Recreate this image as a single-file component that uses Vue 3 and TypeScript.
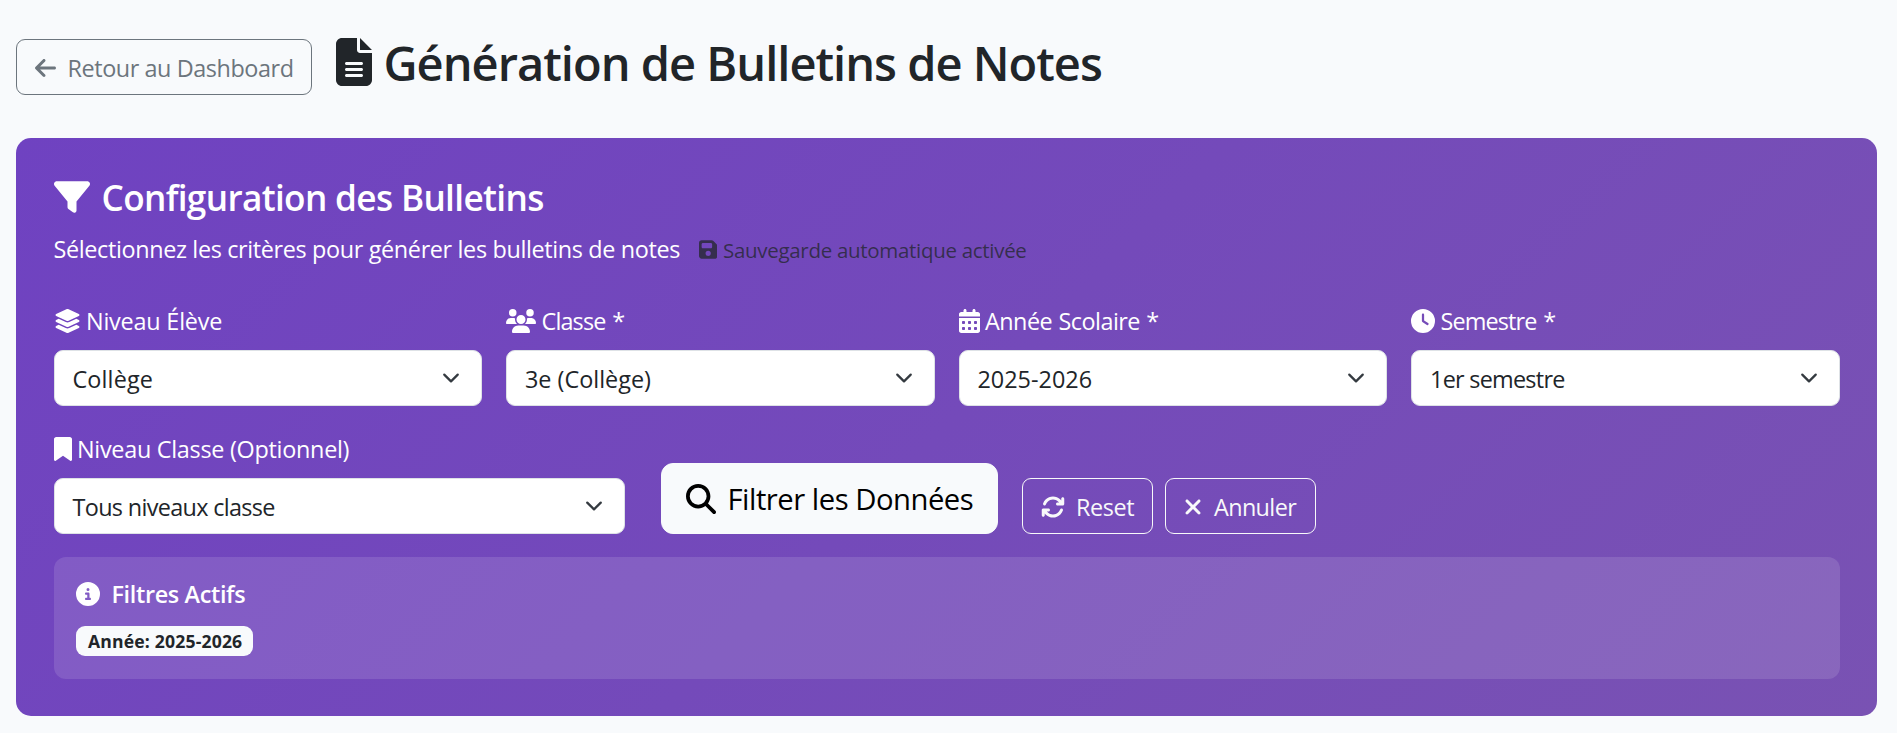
<script setup lang="ts">
import { defineComponent, h, ref } from 'vue'

interface Glyph {
  w: number
  d: string
}

const glyphs: Record<string, Glyph> = {
  arrowLeft: {
    w: 448,
    d: 'M9.4 233.4c-12.5 12.5-12.5 32.8 0 45.3l160 160c12.5 12.5 32.8 12.5 45.3 0s12.5-32.8 0-45.3L109.2 288 416 288c17.7 0 32-14.3 32-32s-14.3-32-32-32l-306.7 0L214.6 118.6c12.5-12.5 12.5-32.8 0-45.3s-32.8-12.5-45.3 0l-160 160z',
  },
  file: {
    w: 384,
    d: 'M64 0C28.7 0 0 28.7 0 64V448c0 35.3 28.7 64 64 64H320c35.3 0 64-28.7 64-64V160H256c-17.7 0-32-14.3-32-32V0H64zM256 0V128H384L256 0zM112 256H272c8.8 0 16 7.2 16 16s-7.2 16-16 16H112c-8.8 0-16-7.2-16-16s7.2-16 16-16zm0 64H272c8.8 0 16 7.2 16 16s-7.2 16-16 16H112c-8.8 0-16-7.2-16-16s7.2-16 16-16zm0 64H272c8.8 0 16 7.2 16 16s-7.2 16-16 16H112c-8.8 0-16-7.2-16-16s7.2-16 16-16z',
  },
  filter: {
    w: 512,
    d: 'M3.9 54.9C10.5 40.9 24.5 32 40 32H472c15.5 0 29.5 8.9 36.1 22.9s4.6 30.5-5.2 42.5L320 320.9V448c0 12.1-6.8 23.2-17.7 28.6s-23.8 4.3-33.5-3l-64-48c-8.1-6-12.8-15.5-12.8-25.6V320.9L9 97.3C-.7 85.4-2.8 68.8 3.9 54.9z',
  },
  save: {
    w: 448,
    d: 'M64 32C28.7 32 0 60.7 0 96V416c0 35.3 28.7 64 64 64H384c35.3 0 64-28.7 64-64V173.3c0-17-6.7-33.3-18.7-45.3L352 50.7C340 38.7 323.7 32 306.7 32H64zm0 96c0-17.7 14.3-32 32-32H288c17.7 0 32 14.3 32 32v64c0 17.7-14.3 32-32 32H96c-17.7 0-32-14.3-32-32V128zM224 288a64 64 0 1 1 0 128 64 64 0 1 1 0-128z',
  },
  layers: {
    w: 576,
    d: 'M264.5 5.2c14.9-6.9 32.1-6.9 47 0l218.6 101c8.5 3.9 13.9 12.4 13.9 21.8s-5.4 17.9-13.9 21.8l-218.6 101c-14.9 6.9-32.1 6.9-47 0L45.9 149.8C37.4 145.8 32 137.3 32 128s5.4-17.9 13.9-21.8L264.5 5.2zM476.9 209.6l53.2 24.6c8.5 3.9 13.9 12.4 13.9 21.8s-5.4 17.9-13.9 21.8l-218.6 101c-14.9 6.9-32.1 6.9-47 0L45.9 277.8C37.4 273.8 32 265.3 32 256s5.4-17.9 13.9-21.8l53.2-24.6 152 70.2c23.4 10.8 50.4 10.8 73.8 0l152-70.2zm-152 198.2l152-70.2 53.2 24.6c8.5 3.9 13.9 12.4 13.9 21.8s-5.4 17.9-13.9 21.8l-218.6 101c-14.9 6.9-32.1 6.9-47 0L45.9 405.8C37.4 401.8 32 393.3 32 384s5.4-17.9 13.9-21.8l53.2-24.6 152 70.2c23.4 10.8 50.4 10.8 73.8 0z',
  },
  users: {
    w: 640,
    d: 'M144 0a80 80 0 1 1 0 160A80 80 0 1 1 144 0zM512 0a80 80 0 1 1 0 160A80 80 0 1 1 512 0zM0 298.7C0 239.8 47.8 192 106.7 192h42.7c15.9 0 31 3.5 44.6 9.7c-1.3 7.2-1.9 14.7-1.9 22.3c0 38.2 16.8 72.5 43.3 96c-.2 0-.4 0-.7 0H21.3C9.6 320 0 310.4 0 298.7zM405.3 320c-.2 0-.4 0-.7 0c26.6-23.5 43.3-57.8 43.3-96c0-7.6-.7-15-1.9-22.3c13.6-6.3 28.7-9.7 44.6-9.7h42.7C592.2 192 640 239.8 640 298.7c0 11.8-9.6 21.3-21.3 21.3H405.3zM224 224a96 96 0 1 1 192 0 96 96 0 1 1-192 0zM128 485.3C128 411.7 187.7 352 261.3 352H378.7C452.3 352 512 411.7 512 485.3c0 14.7-11.9 26.7-26.7 26.7H154.7c-14.7 0-26.7-11.9-26.7-26.7z',
  },
  calendar: {
    w: 448,
    d: 'M128 0c17.7 0 32 14.3 32 32V64H288V32c0-17.7 14.3-32 32-32s32 14.3 32 32V64h48c26.5 0 48 21.5 48 48v48H0V112C0 85.5 21.5 64 48 64H96V32c0-17.7 14.3-32 32-32zM0 192H448V464c0 26.5-21.5 48-48 48H48c-26.5 0-48-21.5-48-48V192zm64 80v32c0 8.8 7.2 16 16 16h32c8.8 0 16-7.2 16-16V272c0-8.8-7.2-16-16-16H80c-8.8 0-16 7.2-16 16zm128 0v32c0 8.8 7.2 16 16 16h32c8.8 0 16-7.2 16-16V272c0-8.8-7.2-16-16-16H208c-8.8 0-16 7.2-16 16zm128 0v32c0 8.8 7.2 16 16 16h32c8.8 0 16-7.2 16-16V272c0-8.8-7.2-16-16-16H336c-8.8 0-16 7.2-16 16zM64 400v32c0 8.8 7.2 16 16 16h32c8.8 0 16-7.2 16-16V400c0-8.8-7.2-16-16-16H80c-8.8 0-16 7.2-16 16zm128 0v32c0 8.8 7.2 16 16 16h32c8.8 0 16-7.2 16-16V400c0-8.8-7.2-16-16-16H208c-8.8 0-16 7.2-16 16zm128 0v32c0 8.8 7.2 16 16 16h32c8.8 0 16-7.2 16-16V400c0-8.8-7.2-16-16-16H336c-8.8 0-16 7.2-16 16z',
  },
  clock: {
    w: 512,
    d: 'M256 0a256 256 0 1 1 0 512A256 256 0 1 1 256 0zM232 120V256c0 8 4 15.5 10.7 20l96 64c11 7.4 25.9 4.4 33.3-6.7s4.4-25.9-6.7-33.3L280 243.2V120c0-13.3-10.7-24-24-24s-24 10.7-24 24z',
  },
  bookmark: {
    w: 384,
    d: 'M0 48V487.7C0 501.1 10.9 512 24.3 512c5 0 9.9-1.5 14-4.4L192 400 345.7 507.6c4.1 2.9 9 4.4 14 4.4c13.4 0 24.3-10.9 24.3-24.3V48c0-26.5-21.5-48-48-48H48C21.5 0 0 21.5 0 48z',
  },
  search: {
    w: 512,
    d: 'M416 208c0 45.9-14.9 88.3-40 122.7L502.6 457.4c12.5 12.5 12.5 32.8 0 45.3s-32.8 12.5-45.3 0L330.7 376c-34.4 25.2-76.8 40-122.7 40C93.1 416 0 322.9 0 208S93.1 0 208 0S416 93.1 416 208zM208 352a144 144 0 1 0 0-288 144 144 0 1 0 0 288z',
  },
  rotate: {
    w: 512,
    d: 'M105.1 202.6c7.7-21.8 20.2-42.3 37.8-59.8c62.5-62.5 163.8-62.5 226.3 0L386.3 160H352c-17.7 0-32 14.3-32 32s14.3 32 32 32H463.5c0 0 0 0 0 0h.4c17.7 0 32-14.3 32-32V80c0-17.7-14.3-32-32-32s-32 14.3-32 32v35.2L414.4 97.6c-87.5-87.5-229.3-87.5-316.8 0C73.2 122 55.6 150.7 44.8 181.4c-5.9 16.7 2.9 34.9 19.5 40.8s34.9-2.9 40.8-19.5zM39 289.3c-5 1.5-9.8 4.2-13.7 8.2c-4 4-6.7 8.8-8.1 14c-.3 1.2-.6 2.5-.8 3.8c-.3 1.7-.4 3.4-.4 5.1V432c0 17.7 14.3 32 32 32s32-14.3 32-32V396.9l17.6 17.5 0 0c87.5 87.4 229.3 87.4 316.7 0c24.4-24.4 42.1-53.1 52.9-83.7c5.9-16.7-2.9-34.9-19.5-40.8s-34.9 2.9-40.8 19.5c-7.7 21.8-20.2 42.3-37.8 59.8c-62.5 62.5-163.8 62.5-226.3 0l-.1-.1L125.6 352H160c17.7 0 32-14.3 32-32s-14.3-32-32-32H48.4c-1.6 0-3.2 .1-4.8 .3s-3.1 .5-4.6 1z',
  },
  close: {
    w: 384,
    d: 'M342.6 150.6c12.5-12.5 12.5-32.8 0-45.3s-32.8-12.5-45.3 0L192 210.7 86.6 105.4c-12.5-12.5-32.8-12.5-45.3 0s-12.5 32.8 0 45.3L146.7 256 41.4 361.4c-12.5 12.5-12.5 32.8 0 45.3s32.8 12.5 45.3 0L192 301.3 297.4 406.6c12.5 12.5 32.8 12.5 45.3 0s12.5-32.8 0-45.3L237.3 256 342.6 150.6z',
  },
  info: {
    w: 512,
    d: 'M256 512A256 256 0 1 0 256 0a256 256 0 1 0 0 512zM216 336h24V272H216c-13.3 0-24-10.7-24-24s10.7-24 24-24h48c13.3 0 24 10.7 24 24v88h8c13.3 0 24 10.7 24 24s-10.7 24-24 24H216c-13.3 0-24-10.7-24-24s10.7-24 24-24zm40-208a32 32 0 1 1 0 64 32 32 0 1 1 0-64z',
  },
}

const Icon = defineComponent({
  props: { name: { type: String, required: true }, size: { type: Number, default: 24 } },
  setup(props) {
    return () => {
      const g = glyphs[props.name]
      return h(
        'svg',
        {
          viewBox: `0 0 ${g.w} 512`,
          width: (props.size * g.w) / 512,
          height: props.size,
          fill: 'currentColor',
          'fill-rule': 'evenodd',
          'aria-hidden': 'true',
        },
        [h('path', { d: g.d })],
      )
    }
  },
})

interface Field {
  key: string
  icon: string
  label: string
  value: string
}

const fields = ref<Field[]>([
  { key: 'level', icon: 'layers', label: 'Niveau Élève', value: 'Collège' },
  { key: 'class', icon: 'users', label: 'Classe *', value: '3e (Collège)' },
  { key: 'year', icon: 'calendar', label: 'Année Scolaire *', value: '2025-2026' },
  { key: 'term', icon: 'clock', label: 'Semestre *', value: '1er semestre' },
])
</script>

<template>
  <main class="page">
    <header class="header">
      <button class="btn btn-back" type="button">
        <Icon class="icon" name="arrowLeft" /><span>Retour au Dashboard</span>
      </button>
      <h1 class="title"><Icon class="icon" name="file" :size="48" /><span>Génération de Bulletins de Notes</span></h1>
    </header>

    <section class="card">
      <h2 class="card-title"><Icon class="icon" name="filter" :size="36" /><span>Configuration des Bulletins</span></h2>
      <div class="intro">
        <span class="intro-text">Sélectionnez les critères pour générer les bulletins de notes</span>
        <span class="autosave"><Icon class="icon" name="save" :size="21" /><span>Sauvegarde automatique activée</span></span>
      </div>

      <div class="fields">
        <div v-for="f in fields" :key="f.key" class="field" :class="'field-' + f.key">
          <div class="label"><Icon class="icon" :name="f.icon" /><span>{{ f.label }}</span></div>
          <div class="select" role="combobox">
            <span>{{ f.value }}</span>
            <svg class="chevron" viewBox="0 0 16 16" width="18" height="18"><path d="m2 5 6 6 6-6" /></svg>
          </div>
        </div>
      </div>

      <div class="actions">
        <div class="field field-section">
          <div class="label"><Icon class="icon" name="bookmark" /><span>Niveau Classe (Optionnel)</span></div>
          <div class="select" role="combobox">
            <span>Tous niveaux classe</span>
            <svg class="chevron" viewBox="0 0 16 16" width="18" height="18"><path d="m2 5 6 6 6-6" /></svg>
          </div>
        </div>
        <button class="btn btn-filter" type="button">
          <Icon class="icon" name="search" :size="30" /><span>Filtrer les Données</span>
        </button>
        <button class="btn btn-outline btn-reset" type="button"><Icon class="icon" name="rotate" /><span>Reset</span></button>
        <button class="btn btn-outline btn-cancel" type="button"><Icon class="icon" name="close" /><span>Annuler</span></button>
      </div>

      <div class="active">
        <h6 class="active-title"><Icon class="icon" name="info" /><span>Filtres Actifs</span></h6>
        <div class="badges"><span class="badge">Année: 2025-2026</span></div>
      </div>
    </section>
  </main>
</template>

<style>
body {
  background: #f8fafc;
}
</style>

<style scoped>
* {
  box-sizing: border-box;
}
.page {
  height: 733px;
  overflow: hidden;
  padding: 33px 20px 0 16px;
  font-family: "Segoe UI", "Open Sans", "Noto Sans", sans-serif;
  font-size: 23.4px;
  line-height: 36px;
  color: #212529;
  white-space: nowrap;
}
h1,
h2,
h6 {
  margin: 0;
  font-weight: 600;
}
.icon {
  flex: none;
  display: block;
}
.header {
  display: flex;
  align-items: flex-start;
  height: 105px;
}
.btn {
  display: flex;
  align-items: center;
  height: 56px;
  margin: 0;
  padding: 1px 0 0 17.5px;
  font: inherit;
  border: 1px solid;
  border-radius: 9px;
  background: transparent;
}
.btn-back {
  width: 296px;
  margin-top: 6px;
  padding-top: 2px;
  gap: 12px;
  color: #6c757d;
  letter-spacing: -0.42px;
}
.title {
  display: flex;
  align-items: center;
  gap: 11.5px;
  margin-left: 24px;
  font-size: 47px;
  line-height: 57.6px;
  letter-spacing: -0.99px;
}
.title span {
  padding-top: 2px;
  margin-bottom: -1px;
}
.card {
  height: 578px;
  padding: 37.5px;
  border-radius: 15px;
  color: #fff;
  background: linear-gradient(135deg, #6f42c1 0%, #7952b3 100%);
}
.card-title {
  display: flex;
  align-items: center;
  gap: 12px;
  margin-bottom: 12px;
  font-size: 35.2px;
  line-height: 43.2px;
  letter-spacing: -0.66px;
}
.intro {
  display: flex;
  align-items: center;
  gap: 19px;
  height: 36px;
  margin-bottom: 36px;
  letter-spacing: -0.35px;
}
.autosave {
  display: flex;
  align-items: center;
  gap: 5.5px;
  padding-top: 2px;
  font-size: 20.5px;
  letter-spacing: -0.3px;
  color: rgba(33, 37, 41, 0.75);
}
.fields {
  display: grid;
  grid-template-columns: repeat(4, 1fr);
  gap: 24px;
}
.label {
  display: flex;
  align-items: center;
  gap: 5.5px;
  height: 36px;
  margin-bottom: 11.3px;
}
.select {
  display: flex;
  align-items: center;
  justify-content: space-between;
  height: 56px;
  padding: 0 21px 0 18px;
  border: 1px solid #dee2e6;
  border-radius: 9px;
  background: #fff;
  color: #212529;
}
.select span {
  padding-top: 2px;
}
.chevron {
  flex: none;
  fill: none;
  stroke: #343a40;
  stroke-width: 2;
  stroke-linecap: round;
  stroke-linejoin: round;
}
.field-level .label { letter-spacing: -0.2px; }
.field-class .label { letter-spacing: -0.84px; word-spacing: 1.5px; }
.field-year .label { letter-spacing: -0.52px; word-spacing: 0.8px; }
.field-term .label { letter-spacing: -0.86px; word-spacing: 1.5px; }
.field-section .label { letter-spacing: -0.28px; }
.field-level .select { letter-spacing: 0.13px; }
.field-term .select { letter-spacing: -0.73px; }
.field-section .select { letter-spacing: -0.66px; }
.actions {
  display: flex;
  align-items: flex-end;
  margin-top: 24.7px;
}
.field-section {
  width: 571.5px;
  margin-right: 36px;
}
.btn-filter {
  width: 337px;
  height: 71px;
  margin-right: 24px;
  padding: 1px 0 0 23.5px;
  gap: 12px;
  font-size: 29.25px;
  letter-spacing: -0.49px;
  color: #000;
  background: #f8fafc;
  border-color: #f8fafc;
  border-radius: 12px;
}
.btn-outline {
  padding-top: 2px;
  color: #f8f9fa;
  border-color: #f8f9fa;
}
.btn-reset {
  width: 131px;
  margin-right: 12px;
  gap: 11.5px;
  letter-spacing: -0.43px;
}
.btn-cancel {
  width: 151px;
  gap: 12.5px;
  letter-spacing: -0.62px;
}
.active {
  height: 122px;
  margin-top: 23px;
  padding: 22.5px;
  border-radius: 12px;
  background: rgba(255, 255, 255, 0.12);
}
.active-title {
  display: flex;
  align-items: center;
  gap: 11.5px;
  height: 28.8px;
  margin-bottom: 17.5px;
  font-size: 23.4px;
  letter-spacing: -0.34px;
}
.badges {
  display: flex;
}
.badge {
  height: 30px;
  padding: 0 11px 0 12px;
  border-radius: 9px;
  background: #f8fafc;
  color: #212529;
  font-size: 17.6px;
  font-weight: 700;
  line-height: 31px;
  letter-spacing: 0.16px;
}
</style>
